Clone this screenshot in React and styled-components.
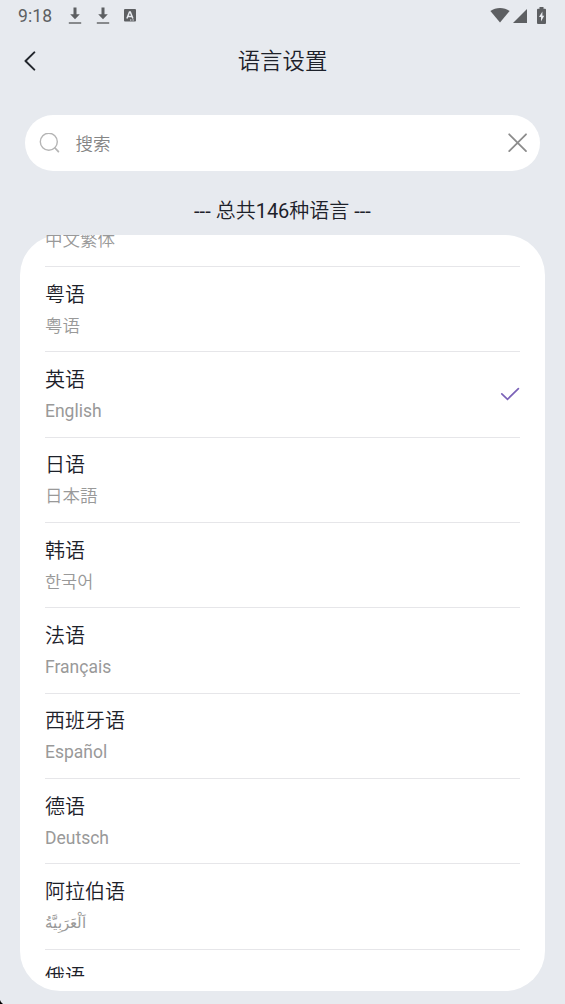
import React from "react";
import styled, { createGlobalStyle } from "styled-components";

const languages = [
  { name: "中文繁体", native: "中文繁体" },
  { name: "粤语", native: "粤语" },
  { name: "英语", native: "English", selected: true },
  { name: "日语", native: "日本語", font: "JP" },
  { name: "韩语", native: "한국어", font: "KR" },
  { name: "法语", native: "Français" },
  { name: "西班牙语", native: "Español" },
  { name: "德语", native: "Deutsch" },
  { name: "阿拉伯语", native: "اَلْعَرَبِيَّةُ", size: "14.8px" },
  { name: "俄语", native: "Русский" },
];

const DownloadIcon = () => (
  <svg width="14" height="18" viewBox="0 0 14 18" fill="#5d5f62">
    <path d="M5.5 .6h3v6.6h3.300L7 12.3 2.200 7.2h3.300z" />
    <path d="M.8 15.3h12.4v1.4H.8z" />
  </svg>
);

const KeyboardIcon = () => (
  <svg width="12" height="13" viewBox="0 0 12 13">
    <rect width="12" height="12.6" rx="1" fill="#5d5f62" />
    <path
      d="M2.9 9.6 5.5 2.9h.8l2.6 6.7M3.9 7.4h4"
      fill="none"
      stroke="#e7eaef"
      strokeWidth="1.5"
    />
    <path d="M6 11h4" stroke="#e7eaef" strokeWidth="1" strokeDasharray="1 .6" />
  </svg>
);

const WifiIcon = () => (
  <svg width="20" height="16" viewBox="0 0 20 16" fill="#5d5f62">
    <path d="M.4 4.1C5.8-.1 14.2-.1 19.6 4.1L10 15.6z" />
  </svg>
);

const SignalIcon = () => (
  <svg width="14" height="14" viewBox="0 0 14 14" fill="#5d5f62">
    <path d="M14 0v14H0z" />
  </svg>
);

const BatteryIcon = () => (
  <svg width="9" height="17" viewBox="0 0 9 17">
    <path
      d="M2.5 0h4v1.8H8q1 0 1 1V16q0 1-1 1H1q-1 0-1-1V2.8q0-1 1-1h1.5z"
      fill="#5d5f62"
    />
    <path d="M5.4 4.6 2 10h2v4.400L7.2 8.700H5.4z" fill="#e7eaef" />
  </svg>
);

const App = () => {
  return (
    <Screen>
      <GlobalStyle />
      <StatusBar>
        <span className="time">9:18</span>
        <div className="notifications">
          <DownloadIcon />
          <DownloadIcon />
          <KeyboardIcon />
        </div>
        <div className="system">
          <WifiIcon />
          <SignalIcon />
          <BatteryIcon />
        </div>
      </StatusBar>
      <Header>
        <BackButton type="button" aria-label="返回">
          <svg width="12" height="20" viewBox="0 0 12 20">
            <path
              d="M10.3 1.4 1.5 10l8.8 8.6"
              fill="none"
              stroke="#23272d"
              strokeWidth="2"
              strokeLinecap="round"
              strokeLinejoin="round"
            />
          </svg>
        </BackButton>
        <h1>语言设置</h1>
      </Header>
      <SearchBar>
        <svg width="21" height="21" viewBox="0 0 21 21" fill="none" stroke="#b5b5b5">
          <circle cx="9.8" cy="8.700" r="8.500" strokeWidth="1.4" />
          <path d="m16 15 3.400 3.600" strokeWidth="1.8" strokeLinecap="round" />
        </svg>
        <span>搜索</span>
        <button type="button" aria-label="清除">
          <svg width="20" height="20" viewBox="0 0 20 20">
            <path
              d="m1.2 1.3 16.8 16.8M18 1.3 1.2 18.1"
              stroke="#8c8c8c"
              strokeWidth="1.8"
              strokeLinecap="round"
            />
          </svg>
        </button>
      </SearchBar>
      <Total>--- 总共146种语言 ---</Total>
      <Panel>
        <List>
          {languages.map((language, index) => {
            return (
              <Row key={index}>
                <div>
                  <Name>{language.name}</Name>
                  <Native $font={language.font} $size={language.size}>
                    {language.native}
                  </Native>
                </div>
                {language.selected && (
                  <svg width="20" height="14" viewBox="0 0 20 14">
                    <path
                      d="m1.8 6.8 5.7 5.5L18.4 1.6"
                      fill="none"
                      stroke="#7b62b8"
                      strokeWidth="1.7"
                      strokeLinecap="round"
                    />
                  </svg>
                )}
              </Row>
            );
          })}
        </List>
      </Panel>
      <Corner viewBox="0 0 4 4">
        <path d="M0 0Q.8 2.8 3 4H0z" />
      </Corner>
    </Screen>
  );
};

export default App;

const GlobalStyle = createGlobalStyle`
  * {
    box-sizing: border-box;
  }
  body {
    margin: 0;
    background: #e7eaef;
    overflow: hidden;
  }
  svg {
    display: block;
    flex-shrink: 0;
  }
`;

const Screen = styled.main`
  position: relative;
  display: flex;
  flex-direction: column;
  width: 565px;
  height: 1004px;
  overflow: hidden;
  background: #e7eaef;
  color: #1d212a;
  font-family: Roboto, "Noto Sans CJK SC DemiLight", "Noto Sans CJK SC",
    sans-serif;
`;

const StatusBar = styled.div`
  display: flex;
  align-items: center;
  height: 31px;
  padding: 0 18px;
  color: #5d5f62;

  .time {
    width: 50px;
    font-size: 17.5px;
    letter-spacing: 0.1px;
  }
  .notifications,
  .system {
    display: flex;
    align-items: center;
  }
  .notifications {
    gap: 14px;
  }
  .system {
    margin-left: auto;
    padding: 0 1px 1px 0;
  }
  .system svg:nth-child(2) {
    margin: 1px 10px 0 3px;
  }
`;

const Header = styled.header`
  display: grid;
  grid-template-columns: 60px 1fr 60px;
  align-items: center;
  height: 60px;

  h1 {
    margin: 0;
    font-size: 22.4px;
    line-height: 30px;
    font-weight: 350;
    text-align: center;
  }
`;

const BackButton = styled.button`
  padding: 0 0 1px 24px;
  border: 0;
  background: transparent;
  cursor: pointer;
`;

const SearchBar = styled.div`
  display: flex;
  align-items: center;
  height: 55.5px;
  margin: 24.3px 25px 0;
  padding: 0 12.5px 0 14px;
  border-radius: 28px;
  background: #fff;

  span {
    flex: 1;
    margin: -1px 0 0 15.5px;
    font-size: 17.5px;
    font-weight: 350;
    color: #858585;
  }
  button {
    padding: 0;
    border: 0;
    background: transparent;
    cursor: pointer;
  }
`;

const Total = styled.p`
  margin: 25.2px 0 9px;
  font-size: 20px;
  line-height: 30px;
  text-align: center;
`;

const Panel = styled.section`
  height: 756.5px;
  margin: 0 20px;
  padding: 0 25px;
  border-radius: 40px;
  background: #fff;
`;

const List = styled.ul`
  height: 743.5px;
  margin: 0;
  padding: 0;
  overflow: hidden;
  list-style: none;

  /* scrolled part way down the first row */
  li:first-child {
    margin-top: -53.4px;
  }
`;

const Row = styled.li`
  display: flex;
  align-items: center;
  justify-content: space-between;
  height: 85.35px;
  border-bottom: 1px solid #e6e6e9;
`;

const Name = styled.div`
  padding-top: 2px;
  font-size: 20px;
  line-height: 32px;
  font-weight: 350;
`;

const Native = styled.div`
  font-family: Roboto,
    "Noto Sans CJK ${(props) => props.$font || "SC"} DemiLight",
    "Noto Sans CJK ${(props) => props.$font || "SC"}", "Noto Sans", sans-serif;
  font-size: ${(props) => props.$size || "17.5px"};
  line-height: 31px;
  color: #999;
`;

const Corner = styled.svg`
  position: absolute;
  left: 0;
  bottom: 0;
  width: 4px;
  height: 4px;
`;
